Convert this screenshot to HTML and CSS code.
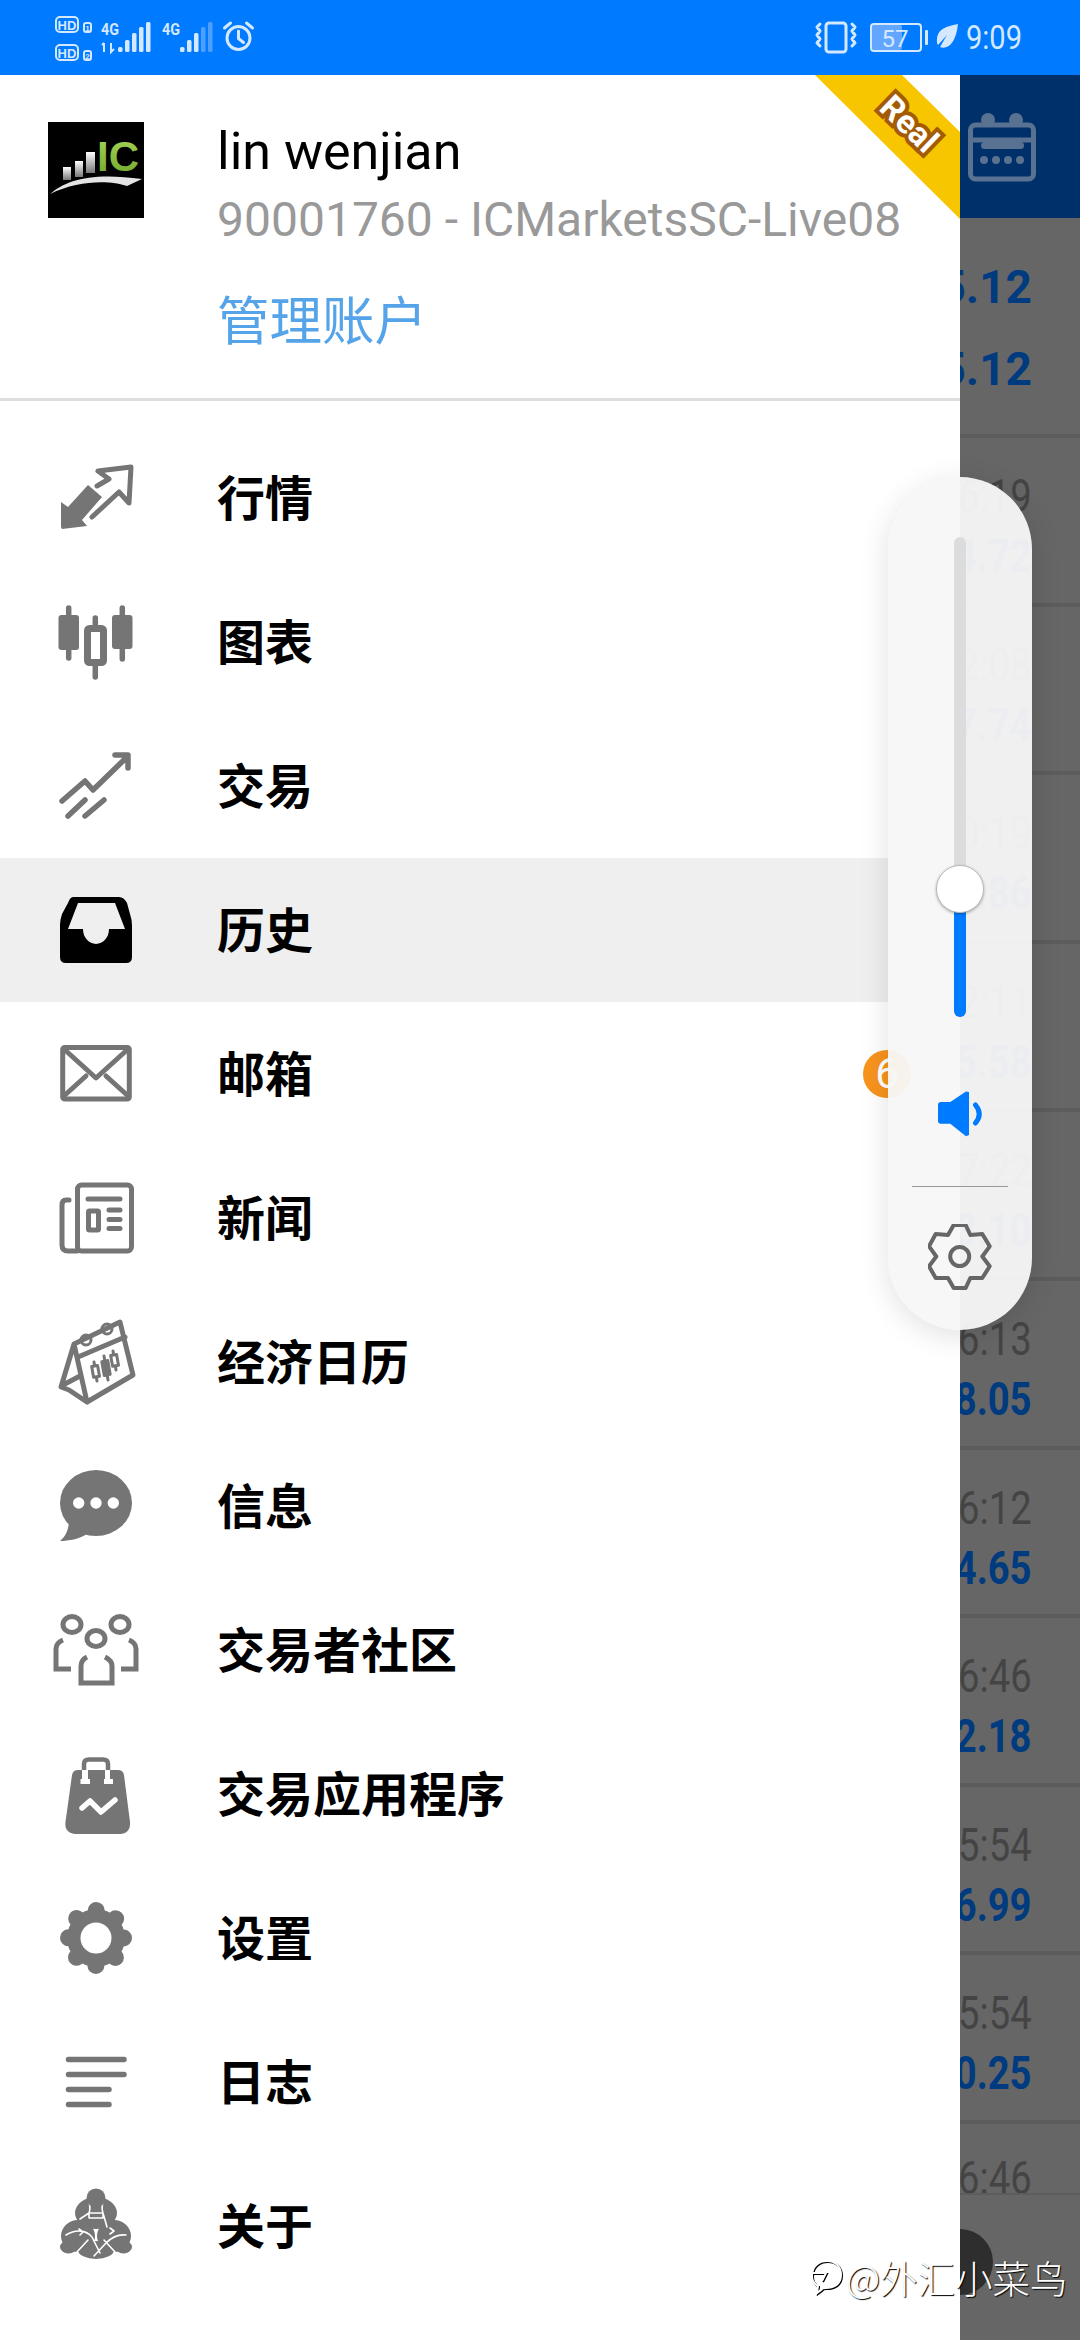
FILE: index.html
```html
<!DOCTYPE html>
<html lang="zh-CN">
<head>
  <meta charset="UTF-8" />
  <meta name="viewport" content="width=device-width, initial-scale=1.0" />
  <title>MetaTrader</title>
  <link rel="stylesheet" href="styles.css">
</head>
<body>
<div class="screen">

  <div class="statusbar">
    <svg class="sb-left" width="200" height="75" viewBox="0 0 200 75">
      <rect class="sb-line" x="1" y="17" width="22" height="15" rx="4" />
      <text class="sb-hd" x="12" y="29.5">HD</text>
      <rect class="sb-line" x="29" y="23" width="7" height="9" rx="2" />
      <text class="sb-tiny" x="32.5" y="30.5">1</text>
      <rect class="sb-line" x="1" y="45" width="22" height="15" rx="4" />
      <text class="sb-hd" x="12" y="57.5">HD</text>
      <rect class="sb-line" x="29" y="51" width="7" height="9" rx="2" />
      <text class="sb-tiny" x="32.5" y="58.5">2</text>

      <text class="sb-4g" x="46" y="35" textLength="18" lengthAdjust="spacingAndGlyphs">4G</text>
      <path class="sb-line" d="M49 43v9M47 45l2-2M56 43v9l3-3" />
      <rect class="sb-bar" x="63" y="47" width="4.5" height="5" rx="1.5" />
      <rect class="sb-bar" x="70" y="40" width="4.5" height="12" rx="1.5" />
      <rect class="sb-bar" x="77" y="33" width="4.5" height="19" rx="1.5" />
      <rect class="sb-bar" x="84" y="27" width="4.5" height="25" rx="1.5" />
      <rect class="sb-bar" x="91" y="22" width="4.5" height="30" rx="1.5" />

      <text class="sb-4g" x="107" y="35" textLength="18" lengthAdjust="spacingAndGlyphs">4G</text>
      <rect class="sb-bar" x="125" y="47" width="4.5" height="5" rx="1.5" />
      <rect class="sb-bar" x="132" y="40" width="4.5" height="12" rx="1.5" />
      <rect class="sb-bar" x="139" y="33" width="4.5" height="19" rx="1.5" />
      <rect class="sb-bar dim" x="146" y="27" width="4.5" height="25" rx="1.5" />
      <rect class="sb-bar dim" x="153" y="22" width="4.5" height="30" rx="1.5" />

      <circle class="sb-line thick" cx="183.5" cy="38" r="11.5" />
      <path class="sb-line thick" d="M183.5 31v7.5l5 4M169.5 28l6-5M197.5 28l-6-5" />
    </svg>

    <svg class="sb-right" width="210" height="75" viewBox="0 0 210 75">
      <rect class="sb-line thick" x="11" y="23" width="20" height="29" rx="3" />
      <path class="sb-line thick" d="M5 24l-3 3 3 4-3 4 3 4-3 4 3 3M37 24l3 3-3 4 3 4-3 4 3 4-3 3" />
      <rect class="sb-fill" x="57" y="25" width="30" height="25" rx="2" />
      <rect class="sb-line" x="56" y="24" width="50" height="27" rx="3" />
      <rect class="sb-bar" x="110" y="30" width="3" height="15" rx="1" />
      <text class="sb-batt" x="80" y="47" textLength="27" lengthAdjust="spacingAndGlyphs">57</text>
      <path class="sb-bar" d="M143 24c-10 2-20 4-21 15-.3 3 0 5 1 6l9-10-7 12c8 3 16-4 18-23z" />
      <text class="sb-time" x="151" y="49" textLength="56" lengthAdjust="spacingAndGlyphs">9:09</text>
    </svg>
  </div>

  <div class="main">
    <!-- account drawer -->
    <div class="drawer">
      <div class="account">
        <svg class="logo" width="96" height="96" viewBox="0 0 96 96">
          <defs>
            <linearGradient id="barGrad" x1="0" y1="0" x2="0" y2="1">
              <stop offset="0" stop-color="#fff" />
              <stop offset="1" stop-color="#777" />
            </linearGradient>
            <linearGradient id="icGrad" x1="0" y1="0" x2="0" y2="1">
              <stop offset="0" stop-color="#a8d65a" />
              <stop offset="1" stop-color="#6fa528" />
            </linearGradient>
          </defs>
          <rect width="96" height="96" fill="#000" />
          <rect x="15" y="45" width="8" height="13" fill="url(#barGrad)" />
          <rect x="27" y="39" width="8" height="16" fill="url(#barGrad)" />
          <rect x="38" y="30" width="9" height="21" fill="url(#barGrad)" />
          <text class="logo-ic" x="49" y="49" fill="url(#icGrad)">IC</text>
          <path d="M2 72C18 58 44 50 94 57L79 64C62 58 30 58 2 72z" fill="#e4e4e4" />
        </svg>
        <div class="account-info">
          <div class="account-name">lin wenjian</div>
          <div class="account-server">90001760 - ICMarketsSC-Live08</div>
          <div class="account-manage">管理账户</div>
        </div>
      </div>

      <div class="ribbon"><span>Real</span></div>

      <div class="menu">
        <div class="menu-row">
          <svg class="icon" viewBox="0 0 72 72">
            <path class="ic-fill" d="M1 40l7 5 20-22 14 12-20 23 5 6-25 3-1-2z" />
            <path class="ic-line thin" d="M37 24l12-7-11-8 33-4-2 36-10-11-27 25" />
          </svg>
          <span>行情</span>
        </div>
        <div class="menu-row">
          <svg class="icon" viewBox="0 0 72 72">
            <path class="ic-line" d="M8.7 2v50M35.3 12v59M62.3 2v51" />
            <rect class="ic-fill" x="-1.5" y="9" width="20.5" height="35" rx="3" />
            <rect class="ic-line thin hollow" x="27.5" y="22.5" width="16" height="34" rx="2" />
            <rect class="ic-fill" x="52" y="9" width="20.5" height="34" rx="3" />
          </svg>
          <span>图表</span>
        </div>
        <div class="menu-row">
          <svg class="icon" viewBox="0 0 72 72">
            <path class="ic-line" d="M2 51l23-20 8 9 34-33M55 5h13v13M8 66l17-16M25 66l19-16" />
          </svg>
          <span>交易</span>
        </div>
        <div class="menu-row active">
          <svg class="icon" viewBox="0 0 72 72">
            <path fill="#000" fill-rule="evenodd" d="M13 3H59Q64 3 67 9L70 20Q72 26 72 31V63Q72 69 66 69H6Q0 69 0 63V31Q0 26 2 20L8 9Q10 3 13 3ZM18 9L8 35H23A13 15 0 0 0 49 35H65L55 9Z" />
          </svg>
          <span>历史</span>
        </div>
        <div class="menu-row">
          <svg class="icon" viewBox="0 0 72 72">
            <rect class="ic-line thin" x="2.7" y="9.5" width="66.6" height="51.5" rx="2" />
            <path class="ic-line thin" d="M5 12l31 28 31-28M5 57l21-19M67 57L46 38" />
          </svg>
          <span>邮箱</span>
          <div class="badge">6</div>
        </div>
        <div class="menu-row">
          <svg class="icon" viewBox="0 0 72 72">
            <rect class="ic-line thin" x="17.5" y="3" width="54" height="66" rx="4" />
            <path class="ic-line thin" d="M9 18H6Q2 18 2 23V63Q2 69 8 69H17M28 17H60M49 28H60M49 37.5H60M49 46.5H60" />
            <rect class="ic-line thin" x="28.5" y="29" width="10" height="19" rx="1" />
          </svg>
          <span>新闻</span>
        </div>
        <div class="menu-row">
          <svg class="icon" viewBox="0 0 72 72">
            <path class="ic-line thin" d="M14 18L60-4l13 53-46 27zM18 31l47-20M14 18L1 61l8 3 18 12M3 59l17-9" />
            <circle class="ic-line slim" cx="26" cy="14" r="5" />
            <circle class="ic-line slim" cx="47" cy="3" r="5" />
            <g class="ic-line slim">
              <path d="M34 36l3 19M44 30l4 24M53 25l3 19" />
              <rect class="solid-white" x="32.5" y="40" width="6" height="11" transform="rotate(-10 35 45)" />
              <rect class="ic-fill" x="43" y="35" width="6" height="14" transform="rotate(-10 46 42)" />
              <rect class="solid-white" x="51.5" y="29" width="6" height="11" transform="rotate(-10 54 34)" />
            </g>
          </svg>
          <span>经济日历</span>
        </div>
        <div class="menu-row">
          <svg class="icon" viewBox="0 0 72 72">
            <ellipse class="ic-fill" cx="36" cy="33" rx="36" ry="33" />
            <path class="ic-fill" d="M9 50C9 60 5 67 0 71 9 71 19 69 27 64z" />
            <circle fill="#fff" cx="18.7" cy="33" r="5.7" />
            <circle fill="#fff" cx="36" cy="33" r="5.7" />
            <circle fill="#fff" cx="53.3" cy="33" r="5.7" />
          </svg>
          <span>信息</span>
        </div>
        <div class="menu-row">
          <svg class="icon" viewBox="0 0 72 72">
            <ellipse class="ic-line thin" cx="12" cy="10.5" rx="9" ry="8" />
            <ellipse class="ic-line thin" cx="60" cy="10.5" rx="9" ry="8" />
            <ellipse class="ic-line thin" cx="36" cy="24.5" rx="9" ry="8" />
            <path class="ic-line thin butt" d="M3 26C-2 28-4 31-4 35V55H11M69 26C74 28 76 31 76 35V55H61M27 43C23 45 21 48 21 52V69H52V52C52 48 49 45 45 43" />
          </svg>
          <span>交易者社区</span>
        </div>
        <div class="menu-row">
          <svg class="icon" viewBox="0 0 72 72">
            <path class="ic-line slim-4" d="M24 14V6Q24 1.500 29 1.500H43Q48 1.500 48 6V14" />
            <path class="ic-fill" d="M18 12H58Q63 12 64 17L70 64Q71 76 58 76H18Q4 76 5.500 64L12 17Q13 12 18 12Z" />
            <path fill="#fff" d="M22 12h6v9h2v5H20.500v-5H22zM45 12h5v9h3v5H44v-5h1z" />
            <path class="ic-line white" d="M22 50l8-7 11 11 14-12" />
          </svg>
          <span>交易应用程序</span>
        </div>
        <div class="menu-row">
          <svg class="icon" viewBox="0 0 72 72">
            <circle class="gear-lobes" cx="36" cy="36" r="27.5" />
            <circle class="ic-fill" cx="36" cy="36" r="29" />
            <circle fill="#fff" cx="36" cy="36" r="15.5" />
          </svg>
          <span>设置</span>
        </div>
        <div class="menu-row">
          <svg class="icon" viewBox="0 0 72 72">
            <path class="ic-line" d="M8.500 13.500H64M8.500 28.500H64M8.500 43.500H49M8.500 58.500H49" />
          </svg>
          <span>日志</span>
        </div>
        <div class="menu-row">
          <svg class="icon" viewBox="0 0 72 72">
            <ellipse class="ic-fill" cx="36" cy="23" rx="21" ry="16" />
            <ellipse class="ic-fill" cx="18" cy="46" rx="17" ry="16" />
            <ellipse class="ic-fill" cx="54" cy="46" rx="17" ry="16" />
            <ellipse class="ic-fill" cx="36" cy="60" rx="18" ry="9" />
            <ellipse class="ic-fill" cx="8.500" cy="57" rx="8.500" ry="6.500" />
            <ellipse class="ic-fill" cx="63.500" cy="57" rx="8.500" ry="6.500" />
            <path class="ic-line hair" d="M28 8c2 6 3 10 1 15l-9 6M44 8c-2 6-3 10-1 15l4 14M29 23h14v5H29zM6 45c10-6 20-5 26 2l8 16M66 45c-8-1-14 2-20 8l-12 13M17 62l11-12M55 62L44 50M19 39l4 3-3 3M50 38l4 3-4 3" />
            <circle class="ic-fill" cx="36" cy="8" r="9.500" />
          </svg>
          <span>关于</span>
        </div>
      </div>
    </div>

    <!-- symbol list behind the drawer, dimmed -->
    <div class="quotes">
      <div class="quotes-top">
        <svg width="68" height="70" viewBox="0 0 68 70">
          <rect class="cal-line" x="2.500" y="13" width="63" height="54" rx="5" />
          <path class="cal-line" d="M3 28H65" />
          <circle class="cal-fill" cx="20" cy="8" r="7" />
          <circle class="cal-fill" cx="48" cy="8" r="7" />
          <rect class="cal-fill" x="13" y="30" width="43" height="7" rx="3.500" />
          <circle class="cal-fill" cx="16" cy="48" r="4" />
          <circle class="cal-fill" cx="28" cy="48" r="4" />
          <circle class="cal-fill" cx="40" cy="48" r="4" />
          <circle class="cal-fill" cx="52" cy="48" r="4" />
        </svg>
      </div>
      <div class="quote first"><b>5.12</b><b>5.12</b></div>
      <div class="quote"><i>6:19</i><b>4.72</b></div>
      <div class="quote"><i>2:08</i><b>7.74</b></div>
      <div class="quote"><i>0:19</i><b>8.86</b></div>
      <div class="quote"><i>2:11</i><b>5.58</b></div>
      <div class="quote"><i>7:22</i><b>3.10</b></div>
      <div class="quote"><i>6:13</i><b>8.05</b></div>
      <div class="quote"><i>6:12</i><b>4.65</b></div>
      <div class="quote"><i>6:46</i><b>2.18</b></div>
      <div class="quote"><i>5:54</i><b>6.99</b></div>
      <div class="quote"><i>5:54</i><b>0.25</b></div>
      <div class="quote short"><i>6:46</i></div>
      <div class="fab"></div>
    </div>
  </div>

  <!-- system volume popup -->
  <div class="volume">
    <div class="track">
      <div class="track-fill"></div>
      <div class="knob"></div>
    </div>
    <svg class="speaker" width="46" height="46" viewBox="0 0 46 46">
      <path fill="#007aff" d="M3 11H12.300L28 .5 31 1V44L28 45.300 12.300 32.700H3Q0 32.700 0 30V14Q0 11 3 11Z" />
      <path d="M37.500 14Q45 23 37.500 32" fill="none" stroke="#007aff" stroke-width="5" stroke-linecap="round" />
    </svg>
    <div class="volume-sep"></div>
    <svg class="cog" width="64" height="66" viewBox="0 0 64 66">
      <path d="M25.700 1H37.700L42.300 11 54.300 10 61.700 22.300 54.300 32.500 61.700 42.300 54.300 54 42.300 54 37.700 64H25.700L20 54H7.700L1 42.300 8.300 32.500 1 22.300 7.700 10 20 11Z" />
      <circle cx="31.700" cy="32.500" r="9.500" />
    </svg>
  </div>

  <div class="watermark">
    <svg width="34" height="40" viewBox="0 0 34 40">
      <path class="wm-shadow" d="M3 20C3 10 10 5 18 5s14 5 14 14-7 13-15 13c-2 0-4 0-5 2l-4 3 1-7C5 28 3 24 3 20zM3 17h14l-4 8" />
      <path class="wm-stroke" d="M2 19C2 9 9 4 17 4s14 5 14 14-7 13-15 13c-2 0-4 0-5 2l-4 3 1-7C4 27 2 23 2 19zM2 16h14l-4 8" />
    </svg>
    <span>@外汇小菜鸟</span>
  </div>

</div>
</body>
</html>
```

FILE: styles.css
```css
* {
  box-sizing: border-box;
}

body {
  margin: 0;
  font-family: Roboto, "Noto Sans CJK SC", sans-serif;
  background-color: #fff;
}

.screen {
  position: relative;
  width: 1080px;
  height: 2340px;
  overflow: hidden;
}

/* status bar */
.statusbar {
  height: 75px;
  background-color: #007aff;
  display: flex;
  justify-content: space-between;
  padding: 0 55px;
}

.sb-line {
  fill: none;
  stroke: #d4e8ff;
  stroke-width: 2;
}

.sb-line.thick {
  stroke-width: 3;
  stroke-linecap: round;
  stroke-linejoin: round;
}

.sb-bar {
  fill: #d4e8ff;
}

.sb-bar.dim {
  fill: #4d9fff;
}

.sb-fill {
  fill: #63a6ff;
}

.sb-hd {
  font: bold 13px "Liberation Sans", sans-serif;
  fill: #d4e8ff;
  text-anchor: middle;
}

.sb-tiny {
  font: bold 8px "Liberation Sans", sans-serif;
  fill: #d4e8ff;
  text-anchor: middle;
}

.sb-4g {
  font: bold 17px Roboto, sans-serif;
  fill: #d4e8ff;
}

.sb-batt {
  font: 24px Roboto, sans-serif;
  fill: #d4e8ff;
  text-anchor: middle;
}

.sb-time {
  font: 34px Roboto, sans-serif;
  fill: #d4e8ff;
}

/* main layout */
.main {
  display: flex;
  height: 2265px;
}

.drawer {
  position: relative;
  width: 960px;
  flex-shrink: 0;
  background-color: #fff;
  overflow: hidden;
}

.account {
  height: 326px;
  border-bottom: 3px solid #dedede;
  display: flex;
  padding: 47px 0 0 48px;
}

.logo {
  flex-shrink: 0;
}

.account-info {
  margin-left: 73px;
}

.account-name {
  font-size: 52px;
  line-height: 60px;
  color: #000;
}

.account-server {
  font-size: 48px;
  line-height: 66px;
  margin-top: 5px;
  color: #999;
  white-space: nowrap;
}

.account-manage {
  font-size: 52.500px;
  line-height: 70px;
  margin-top: 34px;
  color: #55a3e8;
}

.logo-ic {
  font: bold 42px "Liberation Sans", sans-serif;
}

.ribbon {
  position: absolute;
  top: 0;
  right: 0;
  width: 145px;
  height: 144px;
  background-color: #f7c600;
  clip-path: polygon(0 0, 87px 0, 145px 57px, 145px 144px);
}

.ribbon span {
  position: absolute;
  left: 59px;
  top: 31px;
  width: 70px;
  text-align: center;
  font-size: 33px;
  line-height: 36px;
  font-weight: bold;
  color: #fff;
  -webkit-text-stroke: 8px #a35b05;
  paint-order: stroke fill;
  transform: rotate(44deg);
}

/* menu */
.menu {
  padding-top: 25px;
}

.menu-row {
  height: 144px;
  display: flex;
  align-items: center;
  padding-left: 60px;
  font-family: "Noto Sans CJK SC", sans-serif;
  font-size: 48px;
  font-weight: bold;
  color: #000;
}

.menu-row span {
  margin-top: -6px;
}

.menu-row.active {
  background-color: #efefef;
}

.icon {
  width: 72px;
  height: 72px;
  margin-right: 85px;
  flex-shrink: 0;
  overflow: visible;
}

.ic-fill {
  fill: #757575;
}

.ic-line {
  fill: none;
  stroke: #757575;
  stroke-width: 5.500px;
  stroke-linecap: round;
  stroke-linejoin: round;
}

.ic-line.thin {
  stroke-width: 5px;
}

.ic-line.hollow {
  stroke-width: 7px;
  fill: #fff;
}

.ic-line.butt {
  stroke-linecap: butt;
  stroke-linejoin: miter;
}

.ic-line.slim {
  stroke-width: 3px;
}

.ic-line.slim-4 {
  stroke-width: 4.500px;
}

.ic-line.white {
  stroke: #fff;
}

.ic-line.hair {
  stroke: #fff;
  stroke-width: 1.600px;
}

.solid-white {
  fill: #fff;
}

.gear-lobes {
  fill: none;
  stroke: #757575;
  stroke-width: 17px;
  stroke-linecap: round;
  stroke-dasharray: 0.01 21.589;
}

.badge {
  width: 48px;
  height: 48px;
  border-radius: 50%;
  margin-left: auto;
  margin-right: 49px;
  background-color: #f7941d;
  color: #fff;
  font-family: Roboto, sans-serif;
  font-size: 42px;
  font-weight: normal;
  line-height: 48px;
  text-align: center;
}

/* dimmed list on the right */
.quotes {
  position: relative;
  width: 120px;
  background-color: #666;
  overflow: hidden;
}

.quotes-top {
  height: 143px;
  background-color: #00306a;
  padding: 37px 0 0 8px;
}

.cal-line {
  fill: none;
  stroke: #5a7292;
  stroke-width: 5px;
}

.cal-fill {
  fill: #5a7292;
}

.quote {
  height: 168.600px;
  border-bottom: 4px solid #5c5c5c;
  padding: 28px 48px 0 0;
  display: flex;
  flex-direction: column;
  align-items: flex-end;
}

.quote.first {
  height: 220px;
  padding-top: 39px;
}

.quote.short {
  height: 71px;
  border-bottom-width: 2px;
  overflow: hidden;
  padding-top: 24px;
}

.quote i,
.quote b {
  display: block;
  font-size: 46px;
  line-height: 60px;
  font-style: normal;
  white-space: nowrap;
  transform: scaleX(.83);
  transform-origin: right center;
}

.quote i {
  color: #444;
}

.quote b {
  color: #003a7f;
  font-weight: bold;
}

.quote.first b {
  transform: none;
}

.quote.first b + b {
  margin-top: 22px;
}

.fab {
  position: absolute;
  left: -33px;
  top: 2154px;
  width: 66px;
  height: 66px;
  border-radius: 50%;
  background-color: #2e2e2e;
}

/* volume popup */
.volume {
  position: absolute;
  left: 888px;
  top: 477px;
  width: 144px;
  height: 853px;
  padding-top: 60px;
  border-radius: 72px;
  background-color: rgba(247, 247, 247, .954);
  box-shadow: 0 6px 30px rgba(0, 0, 0, .12);
  display: flex;
  flex-direction: column;
  align-items: center;
}

.track {
  position: relative;
  width: 12px;
  height: 480px;
  border-radius: 6px;
  background-color: #dcdcdc;
  flex-shrink: 0;
}

.track-fill {
  position: absolute;
  left: 0;
  bottom: 0;
  width: 12px;
  height: 128px;
  border-radius: 0 0 6px 6px;
  background-color: #007aff;
}

.knob {
  position: absolute;
  left: -18px;
  top: 328px;
  width: 48px;
  height: 48px;
  border-radius: 50%;
  background-color: #fff;
  border: 1px solid #bbb;
  box-shadow: 0 1px 3px rgba(0, 0, 0, .3);
}

.speaker {
  margin-top: 74px;
  margin-left: 1px;
  flex-shrink: 0;
}

.volume-sep {
  width: 96px;
  height: 1px;
  margin-top: 49px;
  background-color: #999;
  flex-shrink: 0;
}

.cog {
  margin-top: 37px;
  flex-shrink: 0;
}

.cog path,
.cog circle {
  fill: none;
  stroke: #666;
  stroke-width: 4px;
  stroke-linejoin: round;
}

/* share watermark */
.watermark {
  position: absolute;
  left: 810px;
  top: 2255px;
  display: flex;
  align-items: center;
  gap: 2px;
  font-family: "Noto Sans CJK SC", sans-serif;
  font-size: 37.500px;
  font-weight: 300;
  line-height: 44px;
  color: #fff;
  text-shadow: 1px 1px 1px #000;
  white-space: nowrap;
}

.wm-shadow {
  fill: none;
  stroke: #000;
  stroke-width: 2px;
}

.wm-stroke {
  fill: none;
  stroke: #fff;
  stroke-width: 2px;
}
```
